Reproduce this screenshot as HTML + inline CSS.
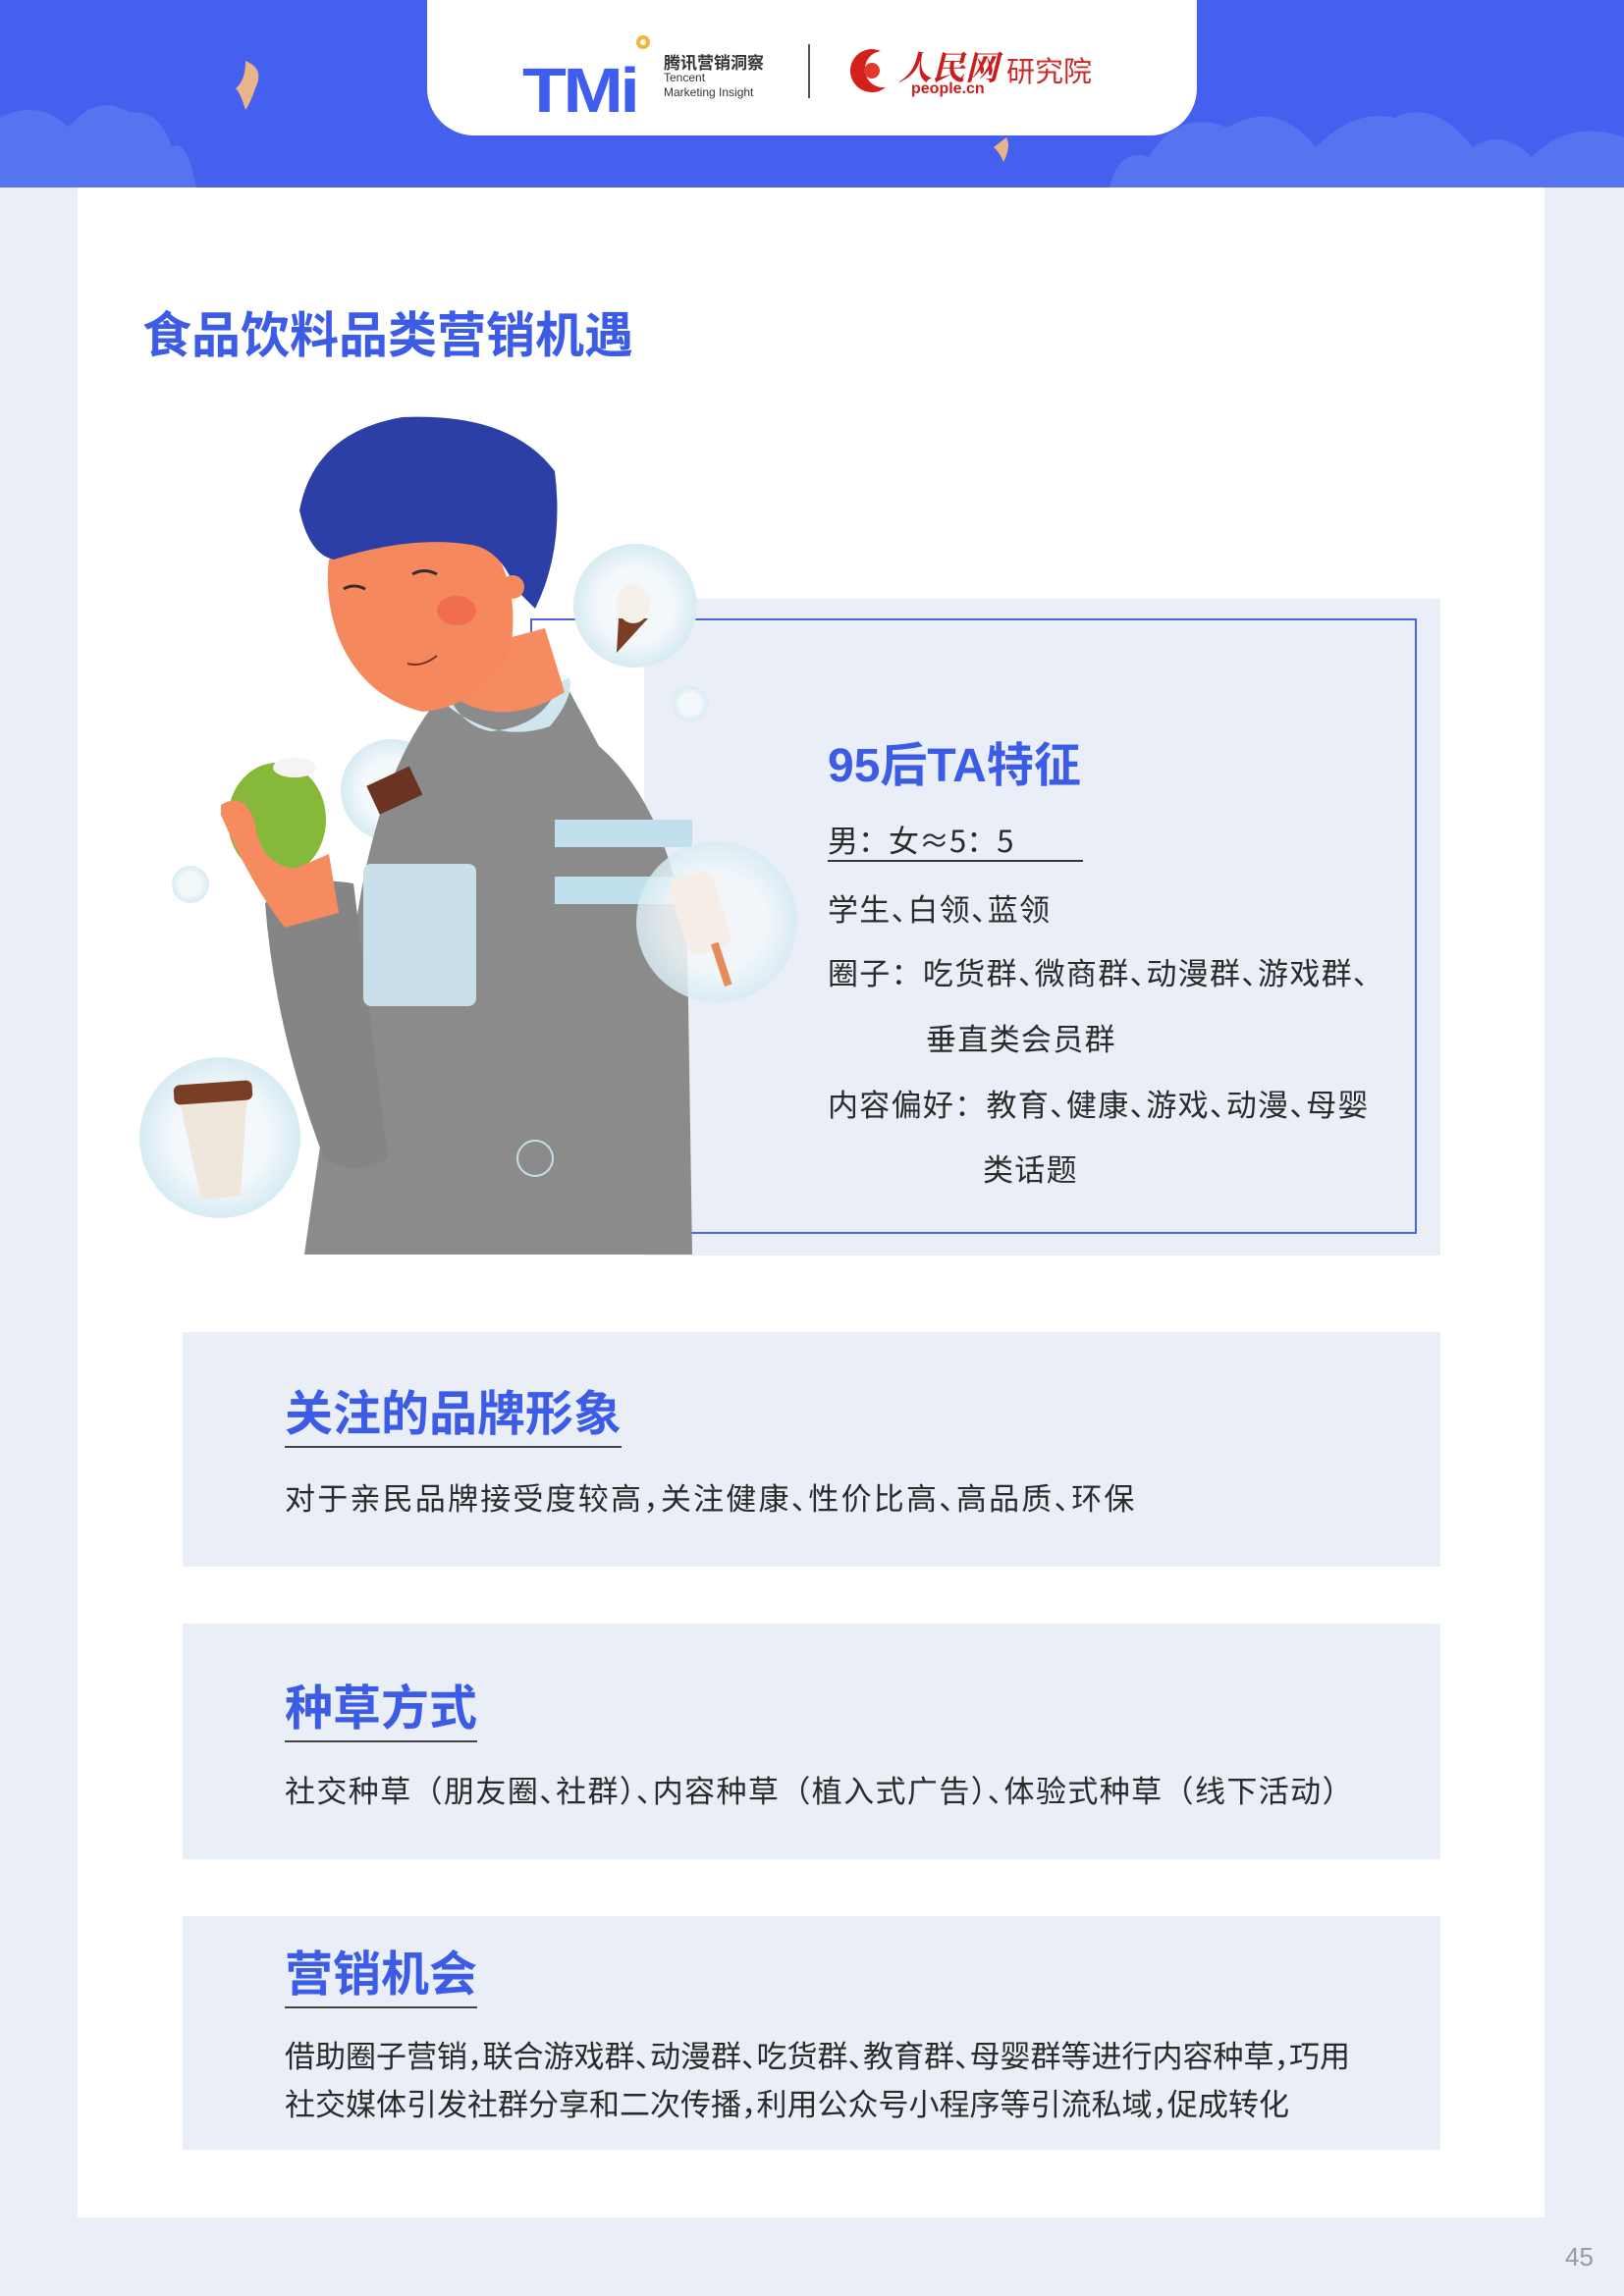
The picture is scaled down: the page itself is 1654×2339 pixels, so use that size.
<!DOCTYPE html>
<html><head><meta charset="utf-8"><style>
*{margin:0;padding:0;box-sizing:border-box}
body{width:1654px;height:2339px;background:#e9eef7;position:relative;overflow:hidden;font-family:"Liberation Sans","Noto Sans CJK SC",sans-serif;color:#222}
.abs{position:absolute}
.hd{left:0;top:0;width:1654px;height:191px;background:#4560ef;overflow:hidden}
.tab{left:435px;top:-20px;width:784px;height:158px;background:#fff;border-radius:0 0 48px 48px}
.panel{left:79px;top:191px;width:1494px;height:2068px;background:#fff}
.title{left:145px;top:302px;font-size:50px;font-weight:bold;color:#3c5ce6}
.ta{left:656px;top:610px;width:811px;height:669px;background:#e9eef7}
.border{left:540px;top:630px;width:903px;height:627px;border:2px solid #4a64e6}
.t{font-size:31px;color:#2a2a2a;white-space:nowrap;font-family:"Noto Sans CJK SC",sans-serif;font-feature-settings:"halt"}
.ls{letter-spacing:1.3px}
.f{font-feature-settings:normal}
.box{left:186px;width:1281px;background:#e9eef7}
.h2{font-size:49px;font-weight:bold;color:#3c5ce6;white-space:nowrap;border-bottom:2px solid #444;padding-bottom:4px;line-height:56px}
</style></head><body>
<div class="abs hd">
<svg width="1654" height="191" style="position:absolute;left:0;top:0">
<path d="M0 120 Q40 100 70 130 Q110 80 160 140 L170 191 L0 191Z" fill="#5674f0"/>
<path d="M30 191 Q60 110 110 120 Q160 100 175 150 Q190 140 200 191Z" fill="#5674f0"/>
<path d="M1130 191 Q1140 150 1170 160 Q1200 110 1250 130 Q1300 100 1340 150 Q1380 110 1420 120 Q1460 100 1500 150 Q1530 130 1560 160 Q1600 120 1654 140 L1654 191Z" fill="#5674f0"/>
<path d="M250 62 Q270 70 260 90 Q255 105 250 112 Q245 95 240 90 Q250 82 250 62Z" fill="#e8b58a"/>
<path d="M1025 140 Q1030 150 1022 165 Q1018 155 1012 150Z" fill="#e8b58a"/>
</svg>
</div>
<div class="abs tab"></div>
<div class="abs" style="left:532px;top:55px;font-size:64px;font-weight:900;color:#3f5ef0;font-family:'Liberation Sans',sans-serif;letter-spacing:-3px;transform:scaleX(1.15);transform-origin:left">TMi</div>
<div class="abs" style="left:648px;top:36px;width:14px;height:14px;border:4px solid #f4b63a;border-radius:50%"></div>
<div class="abs" style="left:676px;top:50px;font-size:17px;font-weight:bold;color:#333">腾讯营销洞察</div>
<div class="abs" style="left:676px;top:72px;font-size:12px;color:#333;line-height:15px">Tencent<br>Marketing Insight</div>
<div class="abs" style="left:823px;top:45px;width:2px;height:55px;background:#555"></div>
<svg class="abs" style="left:862px;top:44px" width="50" height="55"><path d="M35 8 A22 22 0 1 0 40 45 A16 16 0 1 1 35 8Z" fill="#d4201c"/><circle cx="26" cy="28" r="8" fill="#e3382e"/></svg>
<div class="abs" style="left:915px;top:42px;font-size:34px;font-style:italic;font-weight:bold;color:#cc1c1c;font-family:'Liberation Serif','Noto Serif CJK SC',serif">人民网</div>
<div class="abs" style="left:928px;top:82px;font-size:16px;font-weight:bold;color:#cc1c1c">people.cn</div>
<div class="abs" style="left:1025px;top:50px;font-size:29px;color:#cc2a2a">研究院</div>

<div class="abs panel"></div>
<div class="abs title">食品饮料品类营销机遇</div>
<div class="abs ta"></div>
<div class="abs border"></div>

<svg class="abs" style="left:0;top:0" width="1654" height="1300">
<defs><radialGradient id="bb"><stop offset="0.6" stop-color="#f3f8fb"/><stop offset="1" stop-color="#d7ebf3"/></radialGradient></defs>
<circle cx="647" cy="617" r="63" fill="url(#bb)"/>
<path d="M630 630 L660 630 L628 665Z" fill="#7a3e24"/><ellipse cx="645" cy="615" rx="17" ry="20" fill="#f5f0ea"/>
<circle cx="703" cy="717" r="18" fill="url(#bb)"/>
<circle cx="194" cy="901" r="19" fill="url(#bb)"/>
<circle cx="224" cy="1159" r="82" fill="url(#bb)"/>
<path d="M182 1118 L252 1112 L245 1218 L205 1222Z" fill="#efe6dc"/>
<rect x="177" y="1103" width="80" height="20" rx="6" fill="#7a3e24" transform="rotate(-4 217 1113)"/>
<circle cx="399" cy="805" r="52" fill="url(#bb)"/>
<path d="M440 720 Q520 690 575 695 L610 760 Q680 820 700 960 L705 1278 L310 1278 Q335 1100 360 960 Q380 800 440 720Z" fill="#8b8b8b"/>
<path d="M270 920 Q300 890 360 900 L395 1180 Q360 1200 330 1180 Q280 1050 270 920Z" fill="#858585"/>
<path d="M445 710 Q500 760 560 740 Q585 710 580 690 L570 695 Q555 740 500 745 Q470 740 455 705Z" fill="#cfe6ef"/>
<rect x="370" y="880" width="115" height="145" rx="8" fill="#c9dfea"/>
<rect x="565" y="835" width="140" height="28" fill="#bfe0ec"/>
<rect x="565" y="893" width="140" height="28" fill="#bfe0ec"/>
<path d="M480 660 L555 640 L575 705 Q520 740 470 715Z" fill="#f58b5e"/>
<path d="M335 570 Q400 540 500 555 Q530 600 520 660 Q490 720 430 725 Q370 710 345 650 Q330 610 335 570Z" fill="#f5895d"/>
<ellipse cx="465" cy="622" rx="20" ry="15" fill="#f26c50"/>
<path d="M420 585 Q432 578 445 585" stroke="#3a2a2a" stroke-width="3" fill="none"/>
<path d="M350 600 Q360 594 372 600" stroke="#3a2a2a" stroke-width="3" fill="none"/>
<path d="M415 676 Q430 680 445 668" stroke="#7a3020" stroke-width="2" fill="none"/>
<path d="M305 520 Q320 440 410 425 Q520 420 565 480 Q575 560 545 620 L525 600 Q510 560 480 555 Q420 545 340 570 Q315 565 305 520Z" fill="#2c3fa6"/>
<circle cx="522" cy="598" r="12" fill="#f5895d"/>
<ellipse cx="282" cy="835" rx="50" ry="58" fill="#86b83a"/>
<ellipse cx="300" cy="782" rx="22" ry="10" fill="#f4f4f4"/>
<path d="M225 820 Q250 805 260 840 Q265 880 300 885 L335 870 L345 930 L290 945 Q255 900 225 830Z" fill="#f58b5e"/>
<rect x="378" y="790" width="48" height="32" fill="#6b3322" transform="rotate(-25 400 806)"/>
<circle cx="730" cy="939" r="82" fill="url(#bb)" opacity="0.85"/>
<rect x="690" y="890" width="46" height="80" rx="12" fill="#f5ede6" transform="rotate(-18 713 930)"/>
<rect x="730" y="960" width="8" height="45" fill="#e88b5a" transform="rotate(-18 734 980)"/>
<circle cx="545" cy="1180" r="18" fill="none" stroke="#c7dfe9" stroke-width="2"/>
</svg>

<div class="abs" style="left:843px;top:740px;font-size:48px;font-weight:bold;color:#3c5ce6;white-space:nowrap">95后TA特征</div>
<div class="abs t f" style="left:843px;top:834px;width:260px;border-bottom:2px solid #333;line-height:42px">男：女≈5：5</div>
<div class="abs t ls" style="left:843px;top:902px">学生、白领、蓝领</div>
<div class="abs t ls" style="left:843px;top:967px">圈子<span class="f">：</span>吃货群、微商群、动漫群、游戏群、</div>
<div class="abs t ls" style="left:943px;top:1034px">垂直类会员群</div>
<div class="abs t ls" style="left:843px;top:1101px">内容偏好<span class="f">：</span>教育、健康、游戏、动漫、母婴</div>
<div class="abs t ls" style="left:1001px;top:1167px">类话题</div>

<div class="abs box" style="top:1357px;height:239px"></div>
<div class="abs h2" style="left:290px;top:1413px">关注的品牌形象</div>
<div class="abs t" style="left:290px;top:1502px;letter-spacing:2.2px">对于亲民品牌接受度较高，关注健康、性价比高、高品质、环保</div>

<div class="abs box" style="top:1654px;height:240px"></div>
<div class="abs h2" style="left:290px;top:1713px">种草方式</div>
<div class="abs t" style="left:290px;top:1800px;letter-spacing:1.4px">社交种草<span class="f">（</span>朋友圈、社群<span class="f">）</span>、内容种草<span class="f">（</span>植入式广告<span class="f">）</span>、体验式种草<span class="f">（</span>线下活动<span class="f">）</span></div>

<div class="abs box" style="top:1952px;height:238px"></div>
<div class="abs h2" style="left:290px;top:1984px">营销机会</div>
<div class="abs t" style="left:290px;top:2070px">借助圈子营销，联合游戏群、动漫群、吃货群、教育群、母婴群等进行内容种草，巧用</div>
<div class="abs t" style="left:290px;top:2119px">社交媒体引发社群分享和二次传播，利用公众号小程序等引流私域，促成转化</div>

<div class="abs" style="left:1594px;top:2284px;font-size:26px;color:#999">45</div>
</body></html>
